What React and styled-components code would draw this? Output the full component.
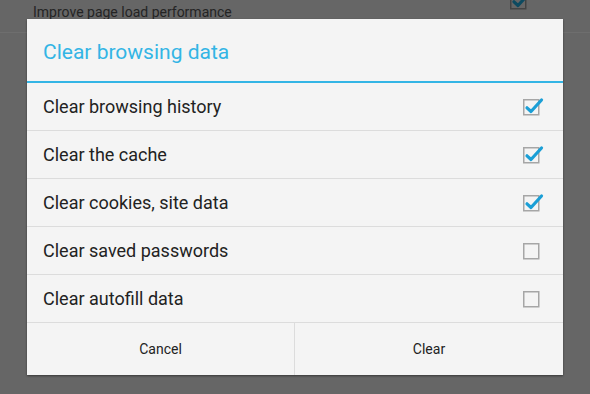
import React from 'react';
import styled, { createGlobalStyle } from 'styled-components';

const options = [
  { label: 'Clear browsing history', checked: true },
  { label: 'Clear the cache', checked: true },
  { label: 'Clear cookies, site data', checked: true },
  { label: 'Clear saved passwords', checked: false },
  { label: 'Clear autofill data', checked: false },
];

const Check = ({ checked, dim }) => (
  <svg width="22" height="22" viewBox="0 0 22 22">
    <rect x="1.75" y="3.75" width="15" height="15" fill="none" stroke={dim ? '#444' : '#a6a6a6'} strokeWidth="1.5" />
    {checked && (
      <path d="M5 11.8 L9 15.5 L19.5 4" fill="none" stroke={dim ? '#0d4a60' : '#1b9fd6'} strokeWidth="3.2" strokeLinecap="round" strokeLinejoin="round" />
    )}
  </svg>
);

const App = () => {
  return (
    <>
      <GlobalStyle />
      <Screen>
        <BehindRow>
          <BehindLabel>Improve page load performance</BehindLabel>
          <BehindBox>
            <Check checked dim />
          </BehindBox>
        </BehindRow>

        <Dialog>
          <Header>Clear browsing data</Header>
          <List>
            {options.map((o) => (
              <Row key={o.label}>
                <RowLabel>{o.label}</RowLabel>
                <Check checked={o.checked} />
              </Row>
            ))}
          </List>
          <ButtonBar>
            <DialogButton>Cancel</DialogButton>
            <DialogButton>Clear</DialogButton>
          </ButtonBar>
        </Dialog>
      </Screen>
    </>
  );
};

export default App;

const GlobalStyle = createGlobalStyle`
  html, body {
    margin: 0;
    padding: 0;
    background: #666;
  }
  * {
    box-sizing: border-box;
  }
`;

const Screen = styled.div`
  position: relative;
  width: 590px;
  height: 394px;
  overflow: hidden;
  background: #666;
  font-family: Roboto, "Noto Sans", sans-serif;
`;

const BehindRow = styled.div`
  display: flex;
  align-items: flex-start;
  justify-content: space-between;
  height: 33px;
  padding: 3px 59px 0 33px;
  border-bottom: 1px solid #6e6e6e;
`;

const BehindLabel = styled.div`
  font-size: 14px;
  line-height: 18px;
  color: #242424;
`;

const BehindBox = styled.div`
  display: flex;
  margin-top: -13px;
`;

const Dialog = styled.div`
  position: absolute;
  left: 27px;
  top: 19px;
  width: 536px;
  display: flex;
  flex-direction: column;
  background: #f4f4f4;
  box-shadow: 0 1px 2px rgba(0, 0, 0, 0.45);
`;

const Header = styled.div`
  height: 64px;
  display: flex;
  align-items: center;
  padding: 4px 16px 0;
  font-size: 21px;
  color: #33b5e5;
  border-bottom: 2px solid #33b5e5;
`;

const List = styled.div`
  display: flex;
  flex-direction: column;
`;

const Row = styled.div`
  height: 48px;
  display: flex;
  align-items: center;
  justify-content: space-between;
  padding: 0 19px 0 16px;
  border-bottom: 1px solid #dcdcdc;
`;

const RowLabel = styled.span`
  font-size: 18px;
  color: #222;
`;

const ButtonBar = styled.div`
  height: 52px;
  display: grid;
  grid-template-columns: 267px 1fr;
`;

const DialogButton = styled.div`
  display: flex;
  align-items: center;
  justify-content: center;
  font-size: 14px;
  color: #222;
  & + & {
    border-left: 1px solid #dcdcdc;
  }
`;
